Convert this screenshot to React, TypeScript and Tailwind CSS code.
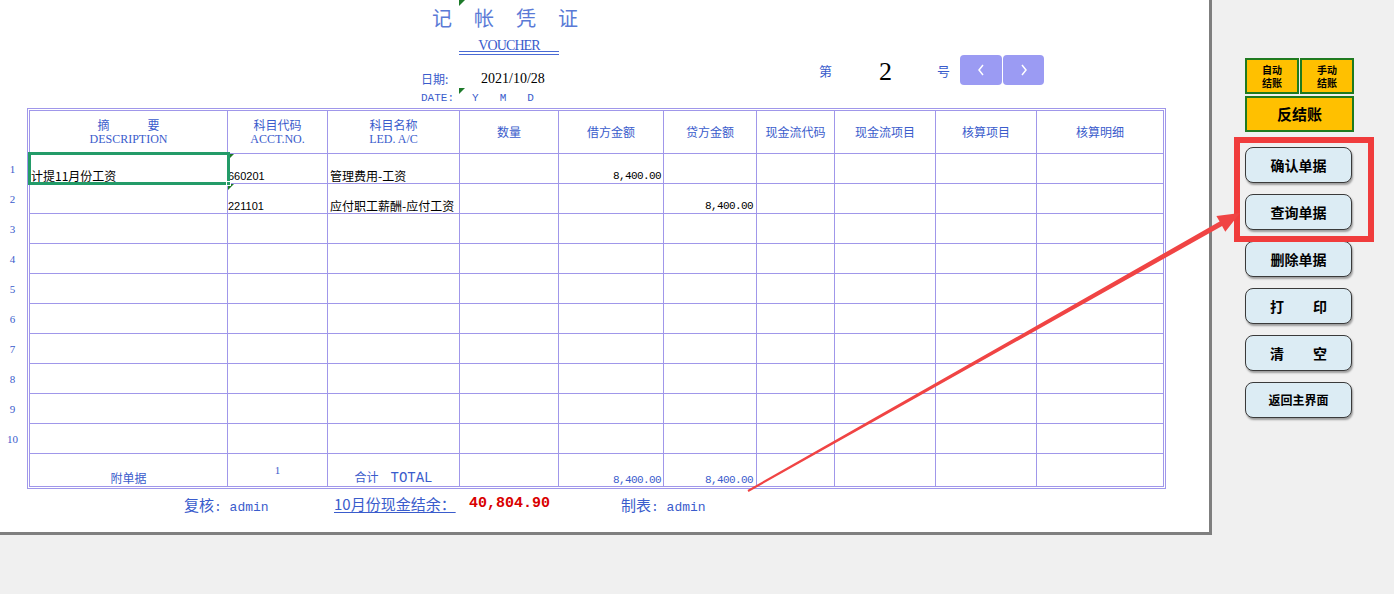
import React from "react";

const cjk = "font-['Noto_Sans_CJK_SC',sans-serif]";
const serif = "font-['Liberation_Serif','Noto_Sans_CJK_SC',serif]";
const mono = "font-['Liberation_Mono','Noto_Sans_CJK_SC',monospace]";

const W = [
  "w-[198px]",
  "w-[100px]",
  "w-[132px]",
  "w-[99px]",
  "w-[105px]",
  "w-[93px]",
  "w-[78px]",
  "w-[101px]",
  "w-[101px]",
  "w-[126px]",
];

function cellCls(i: number, last: boolean) {
  const r = i < 9 ? "border-r" : "";
  const b = last ? "" : "border-b";
  return `${W[i]} ${r} ${b} border-[#a097ea] shrink-0 relative`;
}

function Tri() {
  return (
    <div className="absolute left-0 top-0 w-0 h-0 border-t-[6px] border-t-[#1d7a2a] border-r-[6px] border-r-transparent" />
  );
}

function HeaderRow() {
  const blue = "text-[#3a5ccc]";
  const two = (a: React.ReactNode, b: string) => (
    <div className={`flex flex-col items-center leading-[15px] ${blue}`}>
      <div className={`${cjk} text-[12px]`}>{a}</div>
      <div className={`${serif} text-[12px]`}>{b}</div>
    </div>
  );
  const one = (a: string) => (
    <div className={`${cjk} text-[12px] ${blue}`}>{a}</div>
  );
  const items = [
    two(
      <span>
        摘<span className="ml-[38px]">要</span>
      </span>,
      "DESCRIPTION"
    ),
    two("科目代码", "ACCT.NO."),
    two("科目名称", "LED. A/C"),
    one("数量"),
    one("借方金额"),
    one("贷方金额"),
    one("现金流代码"),
    one("现金流项目"),
    one("核算项目"),
    one("核算明细"),
  ];
  return (
    <div className="flex h-[43px]">
      {items.map((c, i) => (
        <div key={i} className={`${cellCls(i, false)} flex items-center justify-center pb-[1px]`}>
          {c}
        </div>
      ))}
    </div>
  );
}

type RowData = string[];

const rows: RowData[] = [
  ["计提11月份工资", "660201", "管理费用-工资", "", "8,400.00", "", "", "", "", ""],
  ["", "221101", "应付职工薪酬-应付工资", "", "", "8,400.00", "", "", "", ""],
  ["", "", "", "", "", "", "", "", "", ""],
  ["", "", "", "", "", "", "", "", "", ""],
  ["", "", "", "", "", "", "", "", "", ""],
  ["", "", "", "", "", "", "", "", "", ""],
  ["", "", "", "", "", "", "", "", "", ""],
  ["", "", "", "", "", "", "", "", "", ""],
  ["", "", "", "", "", "", "", "", "", ""],
  ["", "", "", "", "", "", "", "", "", ""],
];

function DataRow({ data, idx }: { data: RowData; idx: number }) {
  return (
    <div className="flex h-[30px]">
      {data.map((t, i) => {
        let inner: React.ReactNode = null;
        if (t) {
          if (i === 0) {
            inner = <span className={`${cjk} text-[12px] leading-[14px] pl-[1px] text-black`}>{t}</span>;
          } else if (i === 1) {
            inner = (
              <span className="font-['Liberation_Sans',sans-serif] text-[11px] leading-[14px] text-black">{t}</span>
            );
          } else if (i === 2) {
            inner = <span className={`${cjk} text-[12px] leading-[14px] pl-[2px] text-black`}>{t}</span>;
          } else {
            inner = (
              <span className={`${mono} text-[11px] tracking-[-0.6px] leading-[14px] text-black ml-auto ${i === 4 ? "pr-[2px]" : "pr-[3px]"}`}>
                {t}
              </span>
            );
          }
        }
        return (
          <div key={i} className={`${cellCls(i, false)} flex items-end`}>
            {i === 1 && (idx === 0 || idx === 1) && <Tri />}
            {i === 0 && idx === 0 && (
              <div className="absolute left-[-2px] top-[-2px] w-[202px] h-[33px] border-[3px] border-[#239b68] z-10">
                <div className="absolute right-[-4px] bottom-[-4px] w-[5px] h-[5px] bg-[#239b68] border border-white" />
              </div>
            )}
            {inner}
          </div>
        );
      })}
    </div>
  );
}

function TotalRow() {
  const blue = "text-[#3a5ccc]";
  return (
    <div className="flex h-[32px]">
      <div className={`${cellCls(0, true)} flex items-end justify-center`}>
        <span className={`${cjk} text-[12px] leading-[14px] ${blue} pb-[1px]`}>附单据</span>
      </div>
      <div className={`${cellCls(1, true)} flex items-start justify-center pt-[10px]`}>
        <span className={`${serif} text-[11px] leading-[12px] ${blue}`}>1</span>
      </div>
      <div className={`${cellCls(2, true)} flex items-end justify-center`}>
        <span className={`${cjk} text-[12px] leading-[14px] ${blue} pb-[1px] whitespace-nowrap`}>
          合计<span className={`${mono} text-[14px] ml-[12px]`}>TOTAL</span>
        </span>
      </div>
      <div className={`${cellCls(3, true)}`} />
      <div className={`${cellCls(4, true)} flex items-end`}>
        <span className={`${mono} text-[11px] tracking-[-0.6px] leading-[12px] ${blue} ml-auto pr-[2px]`}>8,400.00</span>
      </div>
      <div className={`${cellCls(5, true)} flex items-end`}>
        <span className={`${mono} text-[11px] tracking-[-0.6px] leading-[12px] ${blue} ml-auto pr-[3px]`}>8,400.00</span>
      </div>
      <div className={`${cellCls(6, true)}`} />
      <div className={`${cellCls(7, true)}`} />
      <div className={`${cellCls(8, true)}`} />
      <div className={`${cellCls(9, true)}`} />
    </div>
  );
}

function Chevron({ dir }: { dir: "l" | "r" }) {
  return (
    <svg width="10" height="14" viewBox="0 0 10 14">
      <polyline
        points={dir === "l" ? "7,2 3,7 7,12" : "3,2 7,7 3,12"}
        fill="none"
        stroke="white"
        strokeWidth="1.5"
      />
    </svg>
  );
}

function SideButton({ children, small }: { children: React.ReactNode; small?: boolean }) {
  return (
    <div
      className={`w-[107px] h-[36px] rounded-[8px] border border-[#3a3a3a] bg-[#dcecf4] shadow-[1px_2px_2px_rgba(0,0,0,0.35)] flex items-center justify-center ${cjk} font-bold text-black ${small ? "text-[12px]" : "text-[14px]"}`}
    >
      {children}
    </div>
  );
}

export default function App() {
  const blue = "text-[#3a5ccc]";
  return (
    <div className={`relative w-[1394px] h-[594px] bg-[#f0f0f0] flex overflow-hidden ${cjk}`}>
      {/* main panel */}
      <div className="w-[1212px] h-[535px] bg-white border-r-[3px] border-b-[3px] border-[#7f7f7f] flex flex-col shrink-0 relative">
        {/* header */}
        <div className="h-[108px] flex relative">
          <div className="absolute left-[459px] top-0 w-0 h-0 border-t-[6px] border-t-[#1d7a2a] border-r-[6px] border-r-transparent" />
          <div className="absolute left-[459px] top-[88px] w-0 h-0 border-t-[6px] border-t-[#1d7a2a] border-r-[6px] border-r-transparent" />
          <div className="w-[819px] pl-[421px] flex flex-col shrink-0">
            <div className={`mt-[5px] ml-[11px] text-[20px] leading-[26px] tracking-[22px] text-[#5a7ad6] ${cjk} whitespace-nowrap`}>
              记帐凭证
            </div>
            <div className="ml-[38px] w-[100px] mt-[9px] flex flex-col">
              <div className={`${serif} text-[14px] tracking-[-0.9px] leading-[12px] text-center ${blue}`}>VOUCHER</div>
              <div className="h-[4px] border-y border-[#4a6ad4] mt-[-1px]" />
            </div>
            <div className="flex items-center mt-[16px] leading-[16px] h-[16px]">
              <span className={`${cjk} text-[12px] w-[60px] ${blue}`}>日期:</span>
              <span className={`${serif} text-[14px] text-black`}>2021/10/28</span>
            </div>
            <div className={`flex mt-[5px] leading-[12px] ${mono} text-[11px] ${blue}`}>
              <span>DATE:</span>
              <span className="ml-[18px]">Y</span>
              <span className="ml-[21px]">M</span>
              <span className="ml-[21px]">D</span>
            </div>
          </div>
          <div className="pt-[55px]">
            <div className="flex items-center h-[30px]">
              <span className={`${cjk} text-[13px] ${blue} pt-[2px]`}>第</span>
              <span className={`${serif} text-[26px] leading-[30px] text-black ml-[47px] pt-[4px]`}>2</span>
              <span className={`${cjk} text-[13px] ${blue} ml-[45px] pt-[2px]`}>号</span>
              <div className="ml-[10px] w-[42px] h-[30px] rounded-[4px] bg-[#9b9bf3] flex items-center justify-center">
                <Chevron dir="l" />
              </div>
              <div className="ml-[1px] w-[41px] h-[30px] rounded-[4px] bg-[#9b9bf3] flex items-center justify-center">
                <Chevron dir="r" />
              </div>
            </div>
          </div>
        </div>

        {/* table area */}
        <div className="flex">
          <div className="w-[27px] pt-[46px] flex flex-col shrink-0">
            {rows.map((_, i) => (
              <div key={i} className={`h-[30px] flex items-center justify-center pr-[2px] ${serif} text-[11px] ${blue}`}>
                {i + 1}
              </div>
            ))}
          </div>
          <div className="border-[3px] border-double border-[#a097ea] flex flex-col">
            <HeaderRow />
            {rows.map((r, i) => (
              <DataRow key={i} data={r} idx={i} />
            ))}
            <TotalRow />
          </div>
        </div>

        {/* footer */}
        <div className={`flex pt-[5px] pl-[184px] leading-[20px] ${blue}`}>
          <span className="w-[150px] whitespace-nowrap">
            <span className={`${cjk} text-[15px]`}>复核</span>
            <span className={`${mono} text-[13px]`}>: admin</span>
          </span>
          <span className={`w-[135px] whitespace-nowrap ${cjk} text-[15px] underline underline-offset-2`}>10月份现金结余：</span>
          <span className={`w-[152px] whitespace-nowrap ${mono} text-[15px] font-bold text-[#d90000]`}>40,804.90</span>
          <span className="whitespace-nowrap">
            <span className={`${cjk} text-[15px]`}>制表</span>
            <span className={`${mono} text-[13px]`}>: admin</span>
          </span>
        </div>
      </div>

      {/* sidebar */}
      <div className="flex flex-col pl-[33px] pt-[58px]">
        <div className="flex gap-[1px]">
          <div className={`w-[54px] h-[36px] border-2 border-[#1f7a1f] bg-[#ffc000] flex flex-col items-center justify-center ${cjk} font-bold text-[10px] leading-[13px] text-black`}>
            <span>自动</span>
            <span>结账</span>
          </div>
          <div className={`w-[54px] h-[36px] border-2 border-[#1f7a1f] bg-[#ffc000] flex flex-col items-center justify-center ${cjk} font-bold text-[10px] leading-[13px] text-black`}>
            <span>手动</span>
            <span>结账</span>
          </div>
        </div>
        <div className={`mt-[2px] w-[109px] h-[36px] border-2 border-[#1f7a1f] bg-[#ffc000] flex items-center justify-center ${cjk} font-bold text-[15px] text-black`}>
          反结账
        </div>
        <div className="mt-[15px] flex flex-col gap-[11px]">
          <SideButton>确认单据</SideButton>
          <SideButton>查询单据</SideButton>
          <SideButton>删除单据</SideButton>
          <SideButton>
            打<span className="ml-[29px]">印</span>
          </SideButton>
          <SideButton>
            清<span className="ml-[29px]">空</span>
          </SideButton>
          <SideButton small>返回主界面</SideButton>
        </div>
      </div>

      {/* annotation: red box */}
      <div className="absolute left-[1234px] top-[137px] w-[140px] h-[105px] border-[6px] border-[#f03c3c] pointer-events-none" />

      {/* annotation: red arrow */}
      <svg className="absolute left-0 top-0 pointer-events-none" width="1394" height="594" viewBox="0 0 1394 594">
        <polygon
          points="748.5,491.9 1222.1,226.0 1225.3,231.7 1240,213 1216.4,216.0 1219.6,221.6 747.5,490.1"
          fill="#f04444"
        />
      </svg>
    </div>
  );
}
